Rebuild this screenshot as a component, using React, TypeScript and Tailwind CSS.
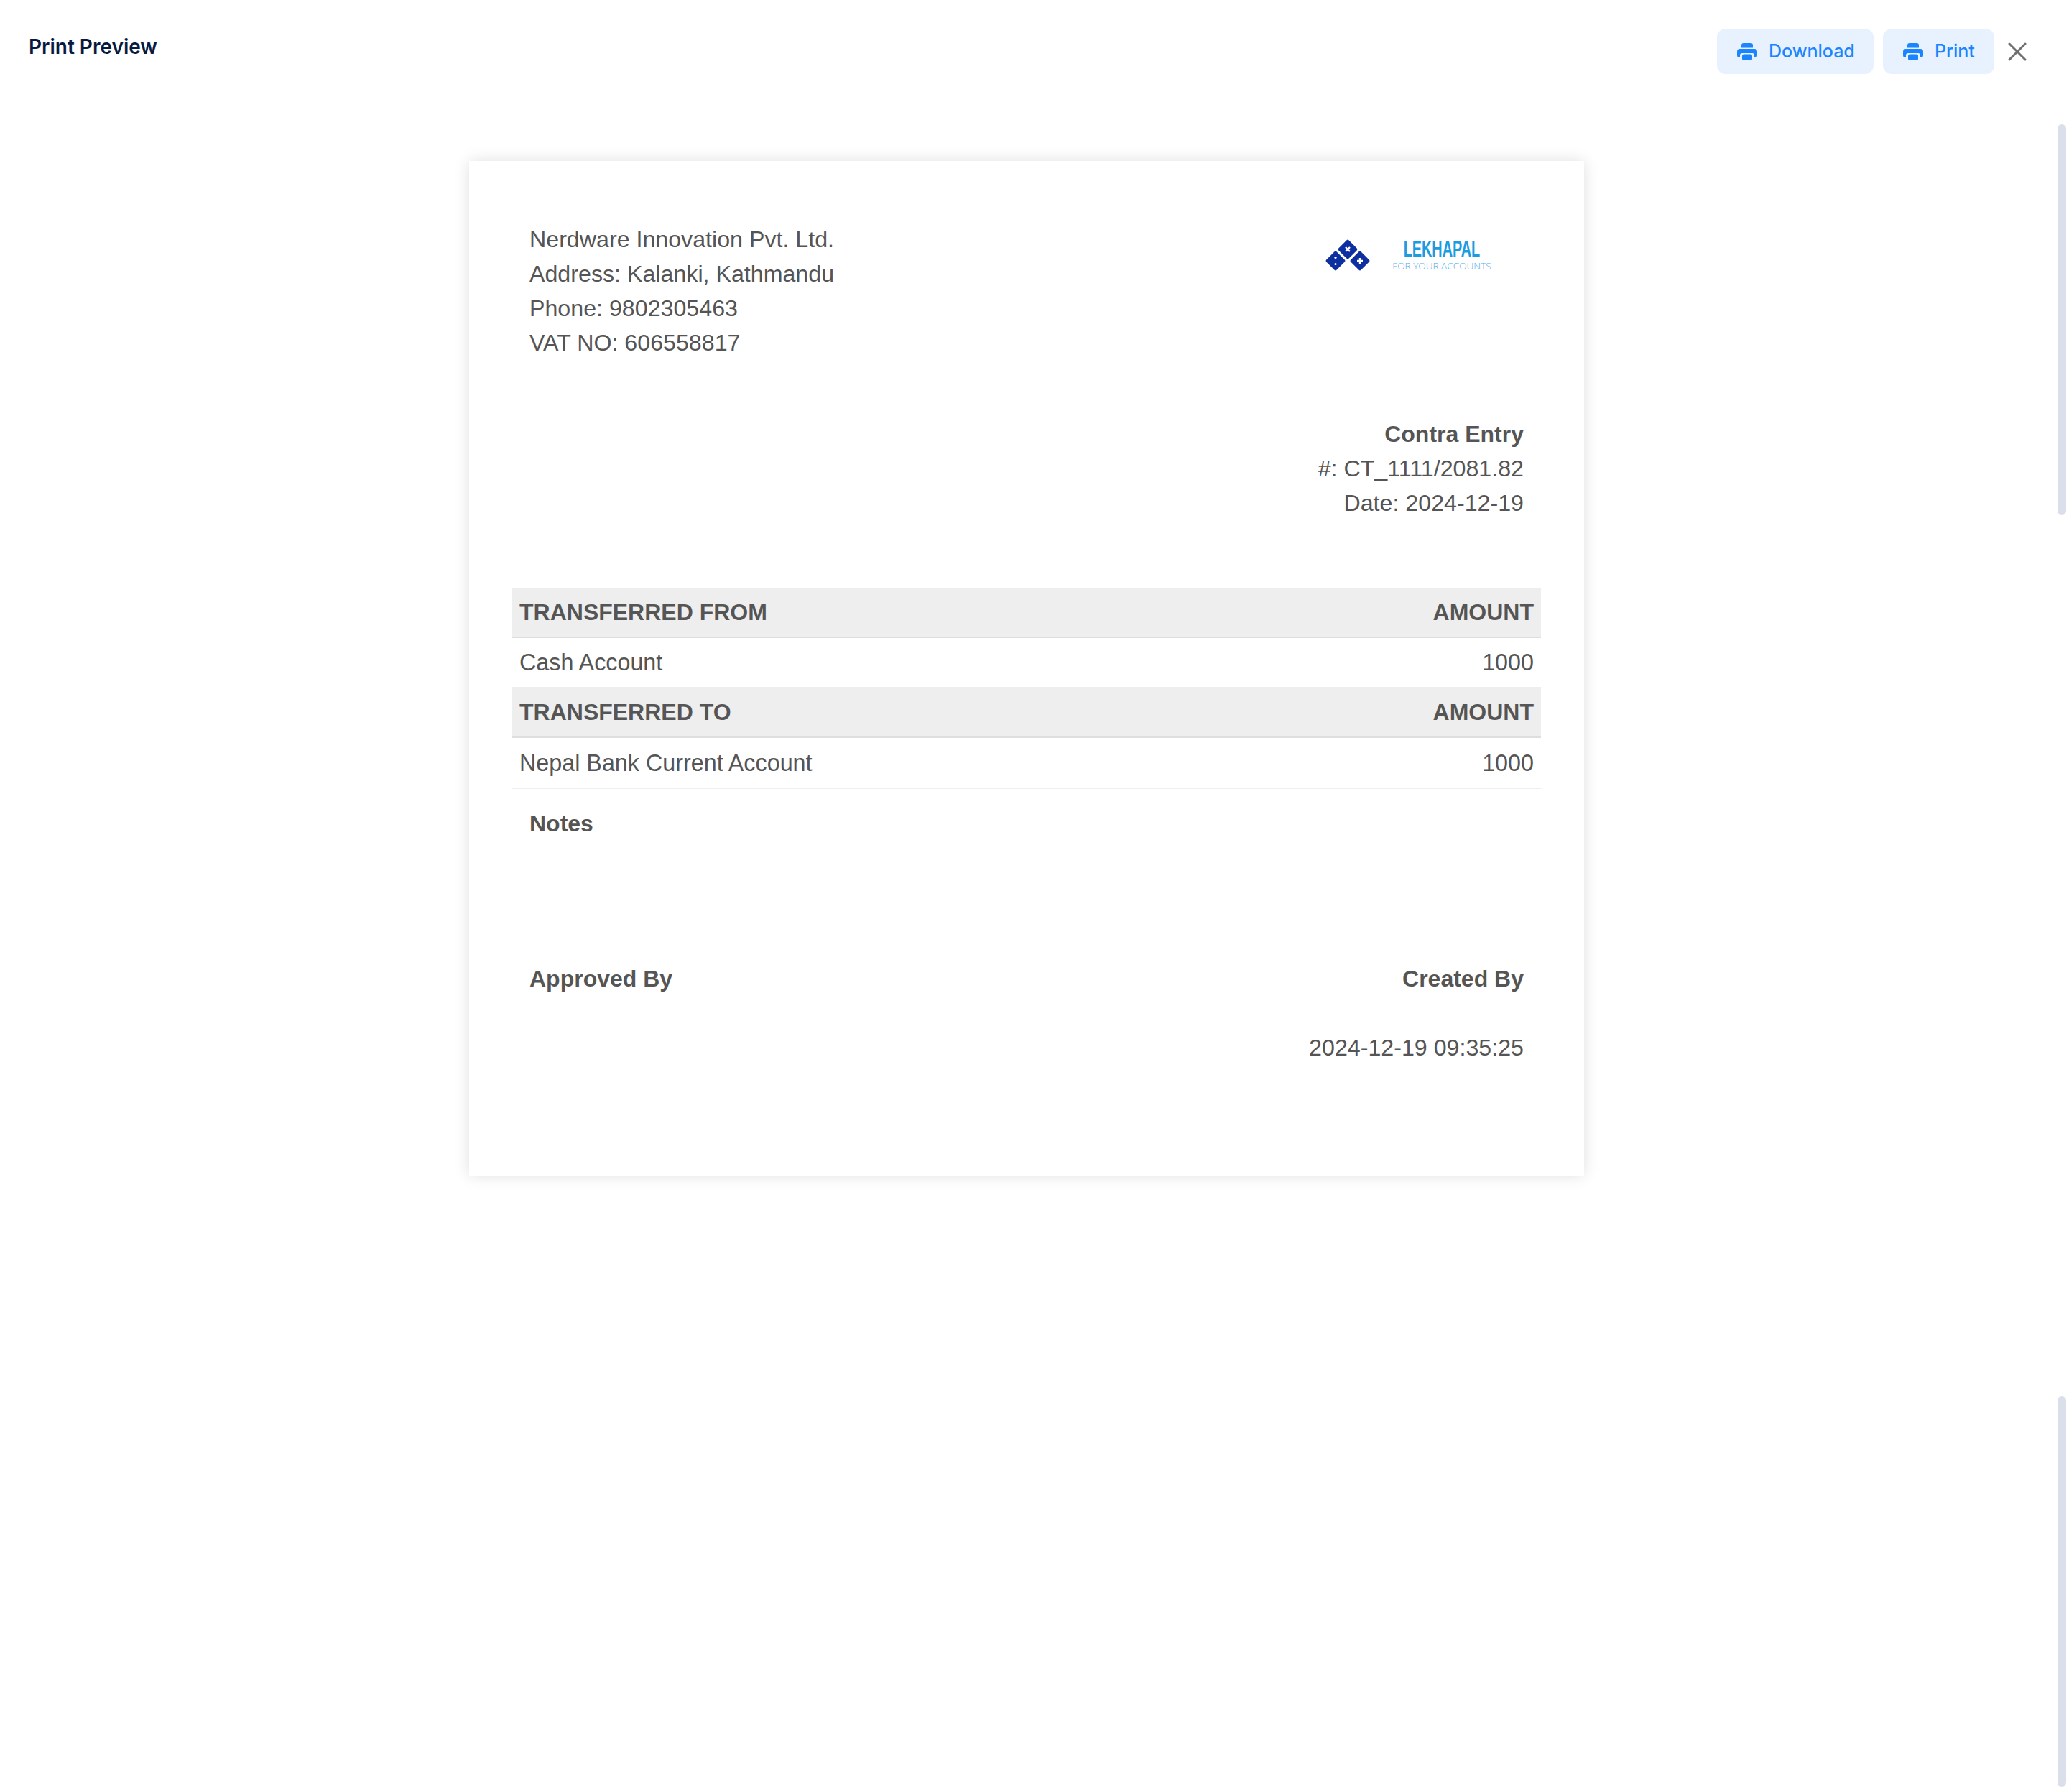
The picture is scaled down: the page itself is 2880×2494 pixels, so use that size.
import React from "react";

function PrinterIcon() {
  return (
    <svg width="28" height="24" viewBox="0 0 28 24" fill="#1a85ff" className="shrink-0">
      <path d="M6 6.5V3a3 3 0 0 1 3-3h10a3 3 0 0 1 3 3v3.5z" />
      <path d="M4 8h20a4 4 0 0 1 4 4v5a3 3 0 0 1-3 3h-1v-3a3 3 0 0 0-3-3H7a3 3 0 0 0-3 3v3H3a3 3 0 0 1-3-3v-5a4 4 0 0 1 4-4z" />
      <rect x="7" y="15.5" width="14" height="8.5" rx="2.5" />
    </svg>
  );
}

function Logo() {
  return (
    <div className="flex items-start w-[233px] h-[50px]">
      <svg width="64" height="46" viewBox="0 0 64 46" className="shrink-0">
        <g fill="#0d2f9f">
          <rect x="22" y="6" width="20" height="20" rx="2" transform="rotate(45 32 16)" />
          <rect x="5" y="22" width="20" height="20" rx="2" transform="rotate(45 15 32)" />
          <rect x="39" y="22" width="20" height="20" rx="2" transform="rotate(45 49 32)" />
        </g>
        <g stroke="#fff" strokeWidth="2.4">
          <path d="M29 13l6 6M35 13l-6 6" />
          <path d="M45 32h8M49 28v8" />
        </g>
        <circle cx="15" cy="27.5" r="1.6" fill="#fff" />
        <circle cx="15" cy="36.5" r="1.6" fill="#fff" />
      </svg>
      <div className="ml-[31px] w-[136px] pt-[1px] flex flex-col items-center">
        <span className="inline-block scale-x-[0.62] font-['Liberation_Sans',sans-serif] text-[32px] leading-[28px] font-bold text-[#1b9be0] whitespace-nowrap">LEKHAPAL</span>
        <span className="mt-[3px] font-['Open_Sans',sans-serif] font-light text-[13.6px] leading-[14px] text-[#4fb0ea] whitespace-nowrap">FOR YOUR ACCOUNTS</span>
      </div>
    </div>
  );
}

function HeadRow({ label, tall }: { label: string; tall?: boolean }) {
  return (
    <div className={`flex justify-between items-center px-[10px] bg-[#eeeeee] border-b-2 border-[#dedede] font-bold ${tall ? "h-[71px]" : "h-[70px]"}`}>
      <span>{label}</span>
      <span>AMOUNT</span>
    </div>
  );
}

function BodyRow({ label, last }: { label: string; last?: boolean }) {
  return (
    <div className={`flex justify-between items-center px-[10px] text-[32.3px] ${last ? "h-[71px] border-b-2 border-[#eeeeee]" : "h-[68px]"}`}>
      <span>{label}</span>
      <span>1000</span>
    </div>
  );
}

export default function App() {
  return (
    <div className="relative w-[2880px] h-[2494px] bg-white overflow-hidden font-['Inter',sans-serif]">
      <header className="flex items-start justify-between h-[224px] pl-[40px] pr-[59px] pt-[40px]">
        <h1 className="text-[28px] leading-[50px] font-semibold text-[#0a1a3f]">Print Preview</h1>
        <div className="flex items-center">
          <button className="flex items-center gap-[16px] h-[63px] w-[218px] pl-[28px] rounded-[12px] bg-[#e8f2ff] text-[#1a85ff] text-[25px] font-medium">
            <PrinterIcon />
            <span>Download</span>
          </button>
          <button className="flex items-center gap-[16px] h-[63px] w-[155px] ml-[13px] pl-[28px] rounded-[12px] bg-[#e8f2ff] text-[#1a85ff] text-[25px] font-medium">
            <PrinterIcon />
            <span>Print</span>
          </button>
          <svg width="26" height="26" viewBox="0 0 26 26" className="ml-[19px]" stroke="#6f6f6f" strokeWidth="3" strokeLinecap="round">
            <path d="M2 2l22 22M24 2L2 24" />
          </svg>
        </div>
      </header>

      <div className="w-[1552px] h-[1412px] ml-[653px] bg-white shadow-[0_0_20px_rgba(0,0,0,0.13)] pt-[85px] font-['Liberation_Sans',sans-serif] text-[32.2px] leading-[48px] text-[#555555]">
        <div className="flex justify-between pl-[84px] pr-[128px]">
          <div>
            <div>Nerdware Innovation Pvt. Ltd.</div>
            <div>Address: Kalanki, Kathmandu</div>
            <div>Phone: 9802305463</div>
            <div>VAT NO: 606558817</div>
          </div>
          <div className="pt-[22px]"><Logo /></div>
        </div>

        <div className="mt-[79px] pr-[84px] text-right">
          <div className="font-bold text-[32px]">Contra Entry</div>
          <div>#: CT_1111/2081.82</div>
          <div>Date: 2024-12-19</div>
        </div>

        <div className="mt-[94px] mx-[60px] text-[32px]">
          <HeadRow label="TRANSFERRED FROM" />
          <BodyRow label="Cash Account" />
          <HeadRow label="TRANSFERRED TO" tall />
          <BodyRow label="Nepal Bank Current Account" last />
        </div>

        <div className="mt-[24px] pl-[84px] font-bold text-[32px]">Notes</div>

        <div className="mt-[168px] flex justify-between px-[84px] font-bold text-[32px]">
          <span>Approved By</span>
          <span>Created By</span>
        </div>
        <div className="mt-[48px] pr-[84px] text-right">2024-12-19 09:35:25</div>
      </div>

      <div className="absolute right-[4px] top-[173px] w-[12px] h-[544px] rounded-full bg-[#dadfe9]" />
      <div className="absolute right-[4px] top-[1943px] w-[12px] h-[544px] rounded-full bg-[#dadfe9]" />
    </div>
  );
}
